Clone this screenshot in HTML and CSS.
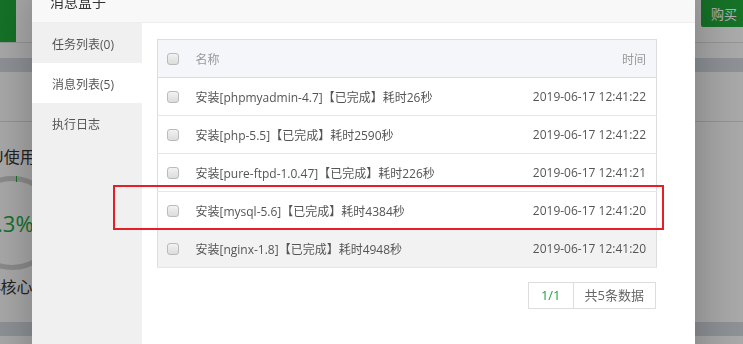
FILE: index.html
```html
<!DOCTYPE html>
<html lang="zh-CN">
<head>
  <meta charset="UTF-8">
  <meta name="viewport" content="width=device-width, initial-scale=1.0">
  <title>消息盒子</title>
  <link rel="stylesheet" href="styles.css">
</head>
<body>
  <!-- page behind the dialog -->
  <div class="page">
    <div class="top">
      <div class="logo"></div>
      <button class="buy">购买</button>
    </div>
    <div class="band"></div>
    <div class="section"></div>
    <div class="stats">
      <div class="stat">
        <div class="stat-title">CPU使用率</div>
        <div class="ring"><span class="ring-val">1.3%</span></div>
        <div class="stat-foot">4核心</div>
      </div>
    </div>
    <div class="band"></div>
  </div>

  <div class="shade"></div>

  <div class="layer">
    <div class="layer-title">消息盒子</div>
    <div class="layer-body">
      <ul class="side">
        <li>任务列表(0)</li>
        <li class="on">消息列表(5)</li>
        <li>执行日志</li>
      </ul>
      <div class="content">
        <table class="msg-table">
          <thead>
            <tr>
              <th class="chk"><span class="box"></span></th>
              <th>名称</th>
              <th class="time">时间</th>
            </tr>
          </thead>
          <tbody>
            <tr>
              <td class="chk"><span class="box"></span></td>
              <td>安装[phpmyadmin-4.7]【已完成】耗时26秒</td>
              <td class="time">2019-06-17 12:41:22</td>
            </tr>
            <tr>
              <td class="chk"><span class="box"></span></td>
              <td>安装[php-5.5]【已完成】耗时2590秒</td>
              <td class="time">2019-06-17 12:41:22</td>
            </tr>
            <tr>
              <td class="chk"><span class="box"></span></td>
              <td>安装[pure-ftpd-1.0.47]【已完成】耗时226秒</td>
              <td class="time">2019-06-17 12:41:21</td>
            </tr>
            <tr>
              <td class="chk"><span class="box"></span></td>
              <td>安装[mysql-5.6]【已完成】耗时4384秒</td>
              <td class="time">2019-06-17 12:41:20</td>
            </tr>
            <tr class="hover">
              <td class="chk"><span class="box"></span></td>
              <td>安装[nginx-1.8]【已完成】耗时4948秒</td>
              <td class="time">2019-06-17 12:41:20</td>
            </tr>
          </tbody>
        </table>
        <div class="pager">
          <span class="cur">1/1</span>
          <span class="total">共5条数据</span>
        </div>
      </div>
    </div>
  </div>

  <div class="mark"></div>
</body>
</html>
```

FILE: styles.css
```css
html, body {
  margin: 0;
  height: 100%;
  overflow: hidden;
}
body {
  font-family: "Open Sans", "Noto Sans CJK SC", sans-serif;
  background: #f4f4f4;
  position: relative;
}

/* background page */
.top {
  height: 42px;
  display: flex;
  justify-content: space-between;
  align-items: flex-start;
  border-bottom: 1px solid #d8d8d8;
  background: #f6f6f6;
}
.logo {
  width: 16px;
  height: 42px;
  background: #20a53a;
}
.buy {
  width: 42px;
  height: 27px;
  border: none;
  border-radius: 0 0 0 2px;
  background: #20a53a;
  color: #fff;
  font-family: inherit;
  font-size: 13px;
  padding: 0 0 0 4px;
}
.band {
  height: 14px;
  margin-top: 15px;
  background: #cdd3d8;
}
.section {
  height: 49px;
  border-bottom: 1px solid #d6d6d6;
}
.stats {
  height: 200px;
  display: flex;
}
.stat {
  width: 110px;
  margin-left: -43px;
  text-align: center;
  padding-top: 24px;
  color: #333;
}
.stat-title {
  font-size: 16px;
  line-height: 22px;
}
.ring {
  width: 84px;
  height: 84px;
  margin: 8px auto 0;
  border: 5px solid #c9c9c9;
  border-radius: 50%;
  position: relative;
  display: flex;
  align-items: center;
  justify-content: center;
}
.ring::before {
  content: "";
  position: absolute;
  top: -5px;
  left: 46px;
  width: 1px;
  height: 6px;
  background: #20a53a;
}
.ring-val {
  color: #20a53a;
  font-size: 22px;
  padding-right: 6px;
}
.stat-foot {
  font-size: 16px;
  margin-top: 4px;
}
.stats + .band {
  margin-top: 0;
}

.shade {
  position: fixed;
  inset: 0;
  background: rgba(0, 0, 0, 0.3);
}

/* dialog */
.layer {
  position: absolute;
  left: 32px;
  top: -19px;
  width: 663px;
  height: 420px;
  background: #fff;
  box-shadow: 1px 1px 50px rgba(0, 0, 0, 0.3);
}
.layer-title {
  height: 41px;
  line-height: 42px;
  padding-left: 18px;
  font-size: 14px;
  color: #333;
  background: #f8f8f8;
  border-bottom: 1px solid #eee;
}
.layer-body {
  display: flex;
  height: 378px;
}
.side {
  width: 110px;
  margin: 0;
  padding: 0;
  list-style: none;
  background: #f0f0f0;
}
.side li {
  height: 40px;
  line-height: 44px;
  padding-left: 20px;
  font-size: 12px;
  color: #555;
}
.side li.on {
  background: #fff;
}
.content {
  flex: 1;
  padding: 16px 15px;
}

.msg-table {
  width: 500px;
  border-collapse: collapse;
  border: 1px solid #ddd;
  font-size: 12px;
  color: #555;
}
.msg-table th,
.msg-table td {
  height: 37px;
  padding: 0;
  text-align: left;
  border-bottom: 1px solid #e6e6e6;
}
.msg-table th {
  background: #f5f6fa;
  font-weight: normal;
  color: #999;
  border-bottom-color: #ddd;
}
.msg-table .chk {
  width: 38px;
  padding-left: 9px;
  box-sizing: border-box;
}
.msg-table .time {
  text-align: right;
  padding-right: 10px;
  color: #555;
}
.msg-table th.time {
  color: #999;
}
.msg-table tr.hover td {
  background: #f2f2f2;
}
.box {
  display: block;
  width: 10px;
  height: 10px;
  border: 1px solid #bbb;
  border-radius: 3px;
  background: linear-gradient(#f2f2f2, #dcdcdc);
}

.pager {
  display: flex;
  justify-content: flex-end;
  width: 499px;
  margin-top: 14px;
  font-size: 13px;
}
.pager span {
  height: 25px;
  line-height: 25px;
  padding: 0 11px;
  border: 1px solid #ddd;
  color: #666;
}
.pager .cur {
  color: #20a53a;
  padding: 0 12px;
}
.pager .total {
  border-left: none;
}

/* red annotation frame */
.mark {
  position: absolute;
  left: 113px;
  top: 185px;
  width: 551px;
  height: 45px;
  box-sizing: border-box;
  border: 2px solid #e61e25;
}
```
